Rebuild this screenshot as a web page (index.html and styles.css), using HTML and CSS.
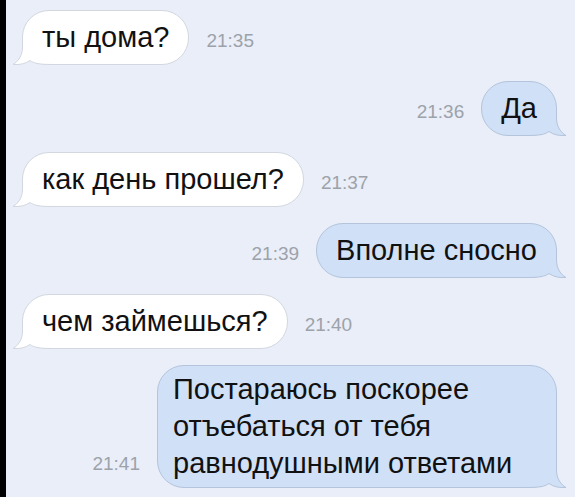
FILE: index.html
```html
<!DOCTYPE html>
<html><head><meta charset="utf-8"/>
<meta name="viewport" content="width=device-width, initial-scale=1.0"/>
<title>Сообщения</title>
<link rel="stylesheet" href="styles.css">
</head>
<body>

<div class="chat">

<div class="row in">
  <div class="bubble">
    <svg class="tail" viewBox="0 0 40 30"><path class="fill" d="M10.5 0 L10.5 12 C10.5 21 6 26.5 1 29.5 C8 30 14 28.5 18 25.5 C22 28.5 28 29.5 40 29.5 L40 0 Z"/><path class="line" d="M10.5 0 L10.5 12 C10.5 21 6 26.5 1 29.5 C8 30 14 28.5 18 25.5 C22 28.5 28 29.5 40 29.5"/></svg>
    <span class="txt">ты дома?</span>
  </div>
  <span class="time">21:35</span>
</div>

<div class="row out">
  <span class="time">21:36</span>
  <div class="bubble">
    <svg class="tail" viewBox="0 0 40 30"><path class="fill" d="M10.5 0 L10.5 12 C10.5 21 6 26.5 1 29.5 C8 30 14 28.5 18 25.5 C22 28.5 28 29.5 40 29.5 L40 0 Z"/><path class="line" d="M10.5 0 L10.5 12 C10.5 21 6 26.5 1 29.5 C8 30 14 28.5 18 25.5 C22 28.5 28 29.5 40 29.5"/></svg>
    <span class="txt">Да</span>
  </div>
</div>

<div class="row in">
  <div class="bubble">
    <svg class="tail" viewBox="0 0 40 30"><path class="fill" d="M10.5 0 L10.5 12 C10.5 21 6 26.5 1 29.5 C8 30 14 28.5 18 25.5 C22 28.5 28 29.5 40 29.5 L40 0 Z"/><path class="line" d="M10.5 0 L10.5 12 C10.5 21 6 26.5 1 29.5 C8 30 14 28.5 18 25.5 C22 28.5 28 29.5 40 29.5"/></svg>
    <span class="txt">как день прошел?</span>
  </div>
  <span class="time">21:37</span>
</div>

<div class="row out">
  <span class="time">21:39</span>
  <div class="bubble">
    <svg class="tail" viewBox="0 0 40 30"><path class="fill" d="M10.5 0 L10.5 12 C10.5 21 6 26.5 1 29.5 C8 30 14 28.5 18 25.5 C22 28.5 28 29.5 40 29.5 L40 0 Z"/><path class="line" d="M10.5 0 L10.5 12 C10.5 21 6 26.5 1 29.5 C8 30 14 28.5 18 25.5 C22 28.5 28 29.5 40 29.5"/></svg>
    <span class="txt">Вполне сносно</span>
  </div>
</div>

<div class="row in">
  <div class="bubble">
    <svg class="tail" viewBox="0 0 40 30"><path class="fill" d="M10.5 0 L10.5 12 C10.5 21 6 26.5 1 29.5 C8 30 14 28.5 18 25.5 C22 28.5 28 29.5 40 29.5 L40 0 Z"/><path class="line" d="M10.5 0 L10.5 12 C10.5 21 6 26.5 1 29.5 C8 30 14 28.5 18 25.5 C22 28.5 28 29.5 40 29.5"/></svg>
    <span class="txt">чем займешься?</span>
  </div>
  <span class="time">21:40</span>
</div>

<div class="row out">
  <span class="time">21:41</span>
  <div class="bubble wide">
    <svg class="tail" viewBox="0 0 40 30"><path class="fill" d="M10.5 0 L10.5 12 C10.5 21 6 26.5 1 29.5 C8 30 14 28.5 18 25.5 C22 28.5 28 29.5 40 29.5 L40 0 Z"/><path class="line" d="M10.5 0 L10.5 12 C10.5 21 6 26.5 1 29.5 C8 30 14 28.5 18 25.5 C22 28.5 28 29.5 40 29.5"/></svg>
    <span class="txt">Постараюсь поскорее<br>отъебаться от тебя<br>равнодушными ответами</span>
  </div>
</div>

</div>

</body>
</html>
```

FILE: styles.css
```css
body {
  margin: 0;
  min-height: 497px;
  box-sizing: border-box;
  background: #e9eef8;
  border-left: 6px solid #000;
  font-family: "Liberation Sans", Arial, sans-serif;
  color: #111;
}
.chat {
  display: flex;
  flex-direction: column;
  gap: 16px;
  padding: 10px 18px 0 16px;
}
.row {
  display: flex;
  align-items: flex-end;
  gap: 17px;
}
.row.out {
  justify-content: flex-end;
}
.bubble {
  position: relative;
  font-size: 29px;
  line-height: 37px;
  padding: 8px 19px 8px 19px;
  border: 1px solid;
  border-radius: 27px;
  white-space: nowrap;
}
.bubble .txt {
  position: relative;
}
.bubble.wide {
  width: 364px;
  padding-left: 15px;
  padding-top: 5px;
  padding-bottom: 5px;
}
.in .bubble {
  background: #fff;
  border-color: #d2d7e0;
}
.out .bubble {
  background: #d0e0f7;
  border-color: #b3c4dc;
}
.tail {
  position: absolute;
  bottom: -1px;
  left: -11px;
  width: 40px;
  height: 30px;
  overflow: visible;
}
.out .tail {
  left: auto;
  right: -11px;
  transform: scaleX(-1);
}
.tail .line {
  fill: none;
  stroke-width: 1;
}
.in .tail .fill { fill: #fff; }
.in .tail .line { stroke: #d2d7e0; }
.out .tail .fill { fill: #d0e0f7; }
.out .tail .line { stroke: #b3c4dc; }
.time {
  font-size: 19px;
  color: #9da2aa;
  margin-bottom: 13px;
}
```
